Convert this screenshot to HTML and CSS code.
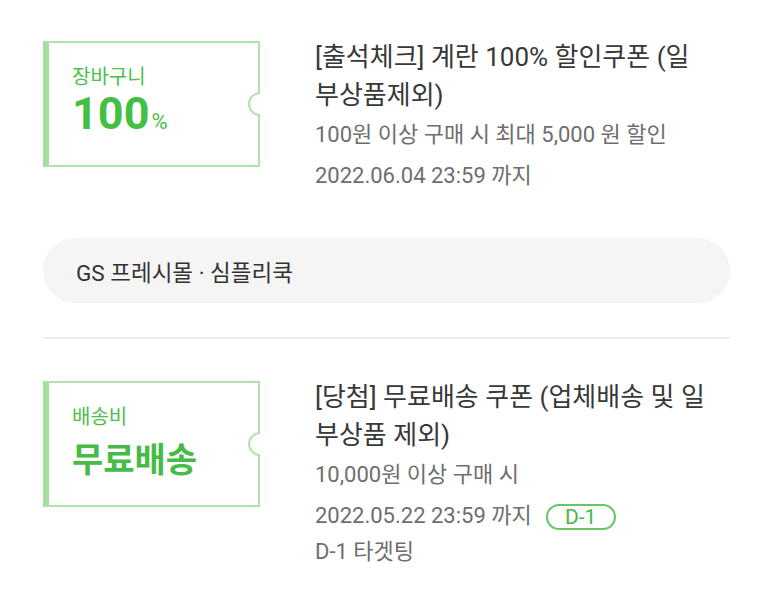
FILE: index.html
```html
<!DOCTYPE html>
<html lang="ko">
<head>
    <meta charset="UTF-8">
    <meta name="viewport" content="width=device-width, initial-scale=1.0">
    <title>쿠폰함</title>
    <link rel="stylesheet" href="styles.css">
</head>
<body>
    <main class="coupons">
        <section class="coupon">
            <div class="ticket">
                <p class="ticket-label">장바구니</p>
                <p class="ticket-value ticket-value-pct">100<span class="unit">%</span></p>
            </div>
            <div class="info">
                <h3 class="info-title">[출석체크] 계란 100% 할인쿠폰 (일<br>부상품제외)</h3>
                <p class="info-sub">100원 이상 구매 시 최대 5,000 원 할인</p>
                <p class="info-sub">2022.06.04 23:59 까지</p>
            </div>
        </section>

        <div class="store">GS 프레시몰 · 심플리쿡</div>

        <hr class="divider">

        <section class="coupon coupon-next">
            <div class="ticket">
                <p class="ticket-label">배송비</p>
                <p class="ticket-value ticket-value-text">무료배송</p>
            </div>
            <div class="info">
                <h3 class="info-title">[당첨] 무료배송 쿠폰 (업체배송 및 일<br>부상품 제외)</h3>
                <p class="info-sub">10,000원 이상 구매 시</p>
                <p class="info-sub">2022.05.22 23:59 까지<span class="badge">D-1</span></p>
                <p class="info-sub info-target">D-1 타겟팅</p>
            </div>
        </section>
    </main>
</body>
</html>
```

FILE: styles.css
```css
body {
    margin: 0;
    padding: 0;
    background: #fff;
    font-family: Roboto, "Noto Sans CJK KR", sans-serif;
    color: #383838;
}

.coupons {
    padding: 38px 43px 0;
}

.coupon {
    display: flex;
    align-items: flex-start;
    gap: 55px;
}

.coupon-next {
    margin-top: 39px;
}

/* ticket shaped box */
.ticket {
    position: relative;
    flex: 0 0 auto;
    width: 217px;
    height: 126px;
    box-sizing: border-box;
    margin-top: 3px;
    padding: 22px 0 0 23px;
    border: 2px solid #b0e4aa;
    border-left: 6px solid #a3df9c;
    color: #43c043;
}

.ticket::after {
    content: "";
    position: absolute;
    top: 50%;
    right: -14px;
    width: 24px;
    height: 24px;
    box-sizing: border-box;
    border: 2px solid #b0e4aa;
    border-radius: 50%;
    background: #fff;
    transform: translateY(-50%);
    clip-path: inset(0 50% 0 0);
}

.ticket-label {
    margin: 0;
    font-size: 20px;
    line-height: 24px;
    color: #4cc04c;
}

.ticket-value {
    margin: 0;
    font-weight: 700;
    line-height: 44px;
}

.ticket-value-pct {
    margin-top: 3px;
    font-size: 45px;
}

.ticket-value-text {
    margin-top: 9px;
    font-size: 34px;
    color: #47bb47;
}

.unit {
    margin-left: 2px;
    font-size: 22px;
    font-weight: 400;
}

.info {
    width: 415px;
}

.info-title {
    margin: 0;
    font-size: 26px;
    font-weight: 400;
    line-height: 38px;
    color: #383838;
}

.info-sub {
    margin: 0;
    font-size: 22px;
    line-height: 41px;
    color: #6e6e6e;
}

.info-target {
    line-height: 32px;
}

.badge {
    display: inline-flex;
    align-items: center;
    justify-content: center;
    width: 70px;
    height: 26px;
    box-sizing: border-box;
    margin-left: 14px;
    border: 2px solid #66c666;
    border-radius: 13px;
    font-size: 21px;
    line-height: 22px;
    color: #45b845;
    vertical-align: middle;
}

.store {
    display: flex;
    align-items: center;
    height: 65px;
    margin-top: 42px;
    padding-left: 33px;
    border-radius: 33px;
    background: #f5f5f5;
    font-size: 22.5px;
    color: #333;
}

.divider {
    height: 2px;
    margin: 34px 0 0;
    border: 0;
    background: #ebebeb;
}
```
